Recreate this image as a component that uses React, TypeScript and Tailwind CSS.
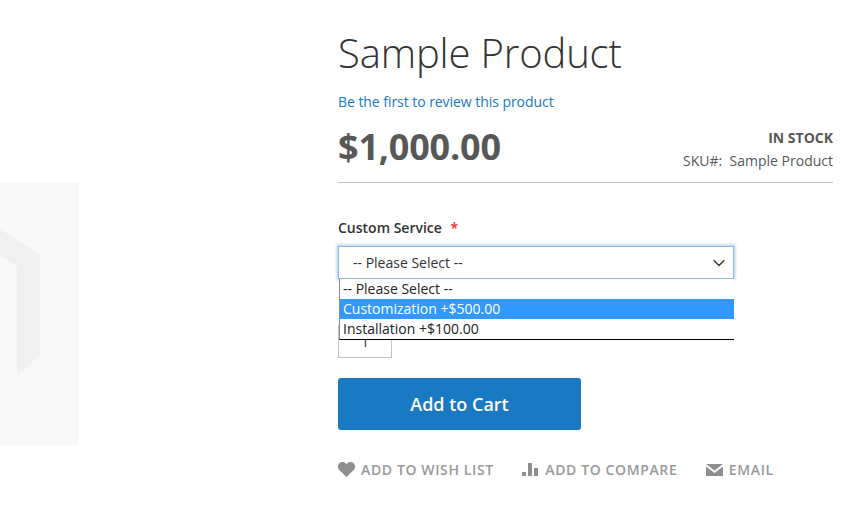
import React from 'react';
import { ChevronDown } from 'lucide-react';

const actions = [
  { label: 'ADD TO WISH LIST', icon: 'heart' },
  { label: 'ADD TO COMPARE', icon: 'bars' },
  { label: 'EMAIL', icon: 'mail' },
];

const ActionIcon: React.FC<{ name: string }> = ({ name }) => {
  if (name === 'heart') {
    return (
      <svg width="17" height="15" viewBox="0 0 17 15" className="shrink-0">
        <path d="M8.5 15 1.6 8.3C-.5 6.200-.5 3 1.300 1.300 3.100-.4 6-.4 7.600 1.300L8.500 2.300 9.400 1.300C11-.4 13.900-.4 15.700 1.300 17.500 3 17.500 6.200 15.400 8.300Z" fill="#8f8f8f" />
      </svg>
    );
  }
  if (name === 'bars') {
    return (
      <svg width="17" height="13" viewBox="0 0 17 13" className="shrink-0">
        <path d="M0 9h4v4H0ZM6 0h4v13H6ZM12 5h4v8h-4Z" fill="#8f8f8f" />
      </svg>
    );
  }
  return (
    <svg width="17" height="12" viewBox="0 0 17 12" className="shrink-0">
      <path d="M0 0h17L8.500 6.500ZM0 2.500 8.500 9 17 2.500V12H0Z" fill="#8f8f8f" />
    </svg>
  );
};

const App: React.FC = () => {
  return (
    <div className="flex h-[531px] w-[849px] overflow-hidden bg-white font-['Open_Sans',sans-serif] text-[#333]">
      <div className="w-[338px] shrink-0 pt-[183px]">
        <div className="h-[262px] w-[79px] bg-[#f8f8f8]">
          <svg width="79" height="262" viewBox="0 0 79 262">
            <path d="M0 46 40 72V172L17 193V83L0 73Z" fill="#f0f0f0" />
          </svg>
        </div>
      </div>

      <div className="w-[495px] shrink-0">
        <h1 className="mt-[27px] text-[40px] font-light leading-[52px] tracking-[-0.15px] text-[#333]">Sample Product</h1>
        <a className="mt-[13px] block text-[14px] leading-[20px] tracking-[-0.05px] text-[#1979c3]">Be the first to review this product</a>

        <div className="mt-[11px] flex h-[60px] justify-between border-b border-[#c1c1c1]">
          <div className="text-[36px] font-bold leading-[48px] tracking-[-0.2px] text-[#575757]">$1,000.00</div>
          <div className="pt-[3px] text-right text-[14px] leading-[23px]">
            <div className="font-bold text-[#575757]">IN STOCK</div>
            <div className="text-[#575757]">SKU#:&nbsp; Sample Product</div>
          </div>
        </div>

        <label className="mt-[35px] block text-[14px] font-semibold leading-[20px]">
          Custom Service <span className="ml-[5px] text-[#e02b27]">*</span>
        </label>

        <div className="relative mt-[8px] w-[396px]">
          <div className="flex h-[33px] items-center justify-between border border-[#8fb8dc] pl-[14px] pr-[4px] text-[14px] text-[#333] shadow-[0_0_3px_1px_#a9cbe8]">
            <span>-- Please Select --</span>
            <ChevronDown size={20} strokeWidth={1.5} className="text-[#333]" />
          </div>

          <div className="absolute left-[1px] top-[33px] z-10 w-[395px] border-b border-l border-b-black border-l-[#8a8a8a] bg-white text-[14px] leading-[20px] text-[#222]">
            <div className="pl-[3px]">-- Please Select --</div>
            <div className="bg-[#3399ff] pl-[3px] text-white">Customization +$500.00</div>
            <div className="pl-[3px]">Installation +$100.00</div>
          </div>

          <div className="mt-[46px] flex h-[33px] w-[54px] items-center justify-center border border-[#c2c2c2] text-[14px] text-[#333]">
            1
          </div>
        </div>

        <button className="mt-[20px] block h-[52px] w-[243px] rounded-[3px] bg-[#1979c3] text-[18px] font-semibold text-white">
          Add to Cart
        </button>

        <div className="mt-[29px] flex items-center gap-[28.5px]">
          {actions.map((action) => (
            <div key={action.label} className="flex items-center gap-[6px] text-[14px] font-semibold tracking-[0.62px] text-[#999]">
              <ActionIcon name={action.icon} />
              <span>{action.label}</span>
            </div>
          ))}
        </div>
      </div>
    </div>
  );
};

export default App;
